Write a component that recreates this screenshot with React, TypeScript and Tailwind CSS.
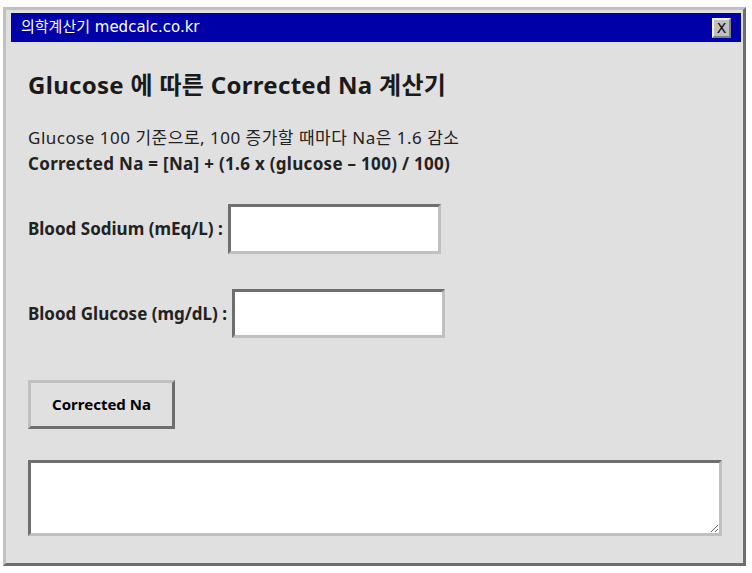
import React from "react";

const bodyFont = { fontFamily: '"Noto Sans", "Noto Sans CJK KR", sans-serif' };

export default function App() {
  return (
    <div className="min-h-screen bg-white pt-[7px] pl-[3px]" style={bodyFont}>
      {/* Window frame */}
      <div className="w-[743px] h-[559px] border-[3px] border-t-[#c0c0c0] border-l-[#c0c0c0] border-r-[#6e6e6e] border-b-[#6e6e6e] bg-[#e0e0e0] pt-[3px] pl-[5px] pr-[2px]">
        {/* Title bar */}
        <div className="h-[29px] bg-[#0000a8] flex items-center justify-between pl-[10px] pr-[10px]">
          <span
            className="text-white text-[15px] leading-none"
            style={{ fontFamily: '"DejaVu Sans", "Noto Sans CJK KR", sans-serif' }}
          >
            의학계산기 medcalc.co.kr
          </span>
          <button
            className="w-[19px] h-[20px] bg-[#c0c0c0] border-2 border-t-[#f0f0f0] border-l-[#f0f0f0] border-r-[#808080] border-b-[#808080] flex items-center justify-center text-[14px] leading-none text-black"
            style={{ fontFamily: '"DejaVu Sans", sans-serif' }}
          >
            X
          </button>
        </div>

        {/* Content */}
        <div className="pl-[17px] text-[#222]">
          <h1 className="mt-[28px] text-[24px] leading-[30px] font-bold tracking-[0.3px] text-[#1a1a1a]">
            Glucose 에 따른 Corrected Na 계산기
          </h1>
          <p className="mt-[25px] text-[17px] leading-[26px] tracking-[0.5px]">
            Glucose 100 기준으로, 100 증가할 때마다 Na은 1.6 감소
          </p>
          <p className="text-[17px] leading-[26px] font-bold tracking-[0.3px]">
            Corrected Na = [Na] + (1.6 x (glucose – 100) / 100)
          </p>

          <div className="mt-[27px] flex items-center">
            <span className="text-[17px] font-bold">Blood Sodium (mEq/L) :</span>
            <input
              type="text"
              className="ml-[5px] w-[213px] h-[50px] bg-white border-[3px] border-t-[#6e6e6e] border-l-[#6e6e6e] border-r-[#c0c0c0] border-b-[#c0c0c0] outline-none"
            />
          </div>

          <div className="mt-[35px] flex items-center">
            <span className="text-[17px] font-bold">Blood Glucose (mg/dL) :</span>
            <input
              type="text"
              className="ml-[5px] w-[213px] h-[49px] bg-white border-[3px] border-t-[#6e6e6e] border-l-[#6e6e6e] border-r-[#c0c0c0] border-b-[#c0c0c0] outline-none"
            />
          </div>

          <button className="mt-[42px] w-[147px] h-[49px] bg-[#e0e0e0] border-[3px] border-t-[#c0c0c0] border-l-[#c0c0c0] border-r-[#6e6e6e] border-b-[#6e6e6e] text-[15px] font-bold text-black">
            Corrected Na
          </button>

          <textarea className="block mt-[31px] w-[694px] h-[76px] bg-white border-[3px] border-t-[#6e6e6e] border-l-[#6e6e6e] border-r-[#c0c0c0] border-b-[#c0c0c0] outline-none" />
        </div>
      </div>
    </div>
  );
}
